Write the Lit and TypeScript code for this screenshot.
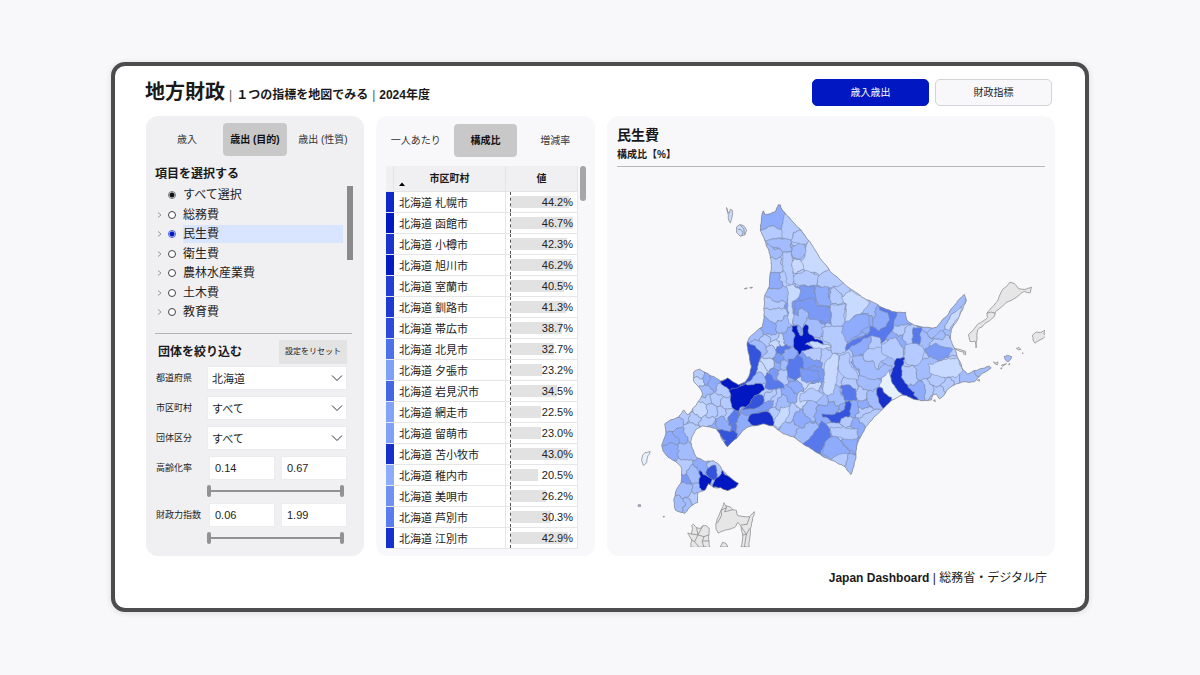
import { LitElement, html, svg, css } from 'lit';
import { customElement, property, state } from 'lit/decorators.js';
import { classMap } from 'lit/directives/class-map.js';
import { styleMap } from 'lit/directives/style-map.js';

type Point = [number, number];
type Seed = [number, number, string];

/* ---------- shared type and control styles ---------- */

const shared = css`
  *,
  *::before,
  *::after {
    box-sizing: border-box;
  }
  h1, h2, h3, p, ul {
    margin: 0;
    padding: 0;
  }
  button, input, select {
    font: inherit;
    color: inherit;
    margin: 0;
  }
  .panel {
    background: #f8f8fb;
    border-radius: 12px;
    min-width: 0;
  }
  .tabs {
    display: grid;
    grid-template-columns: repeat(3, 1fr);
    height: 33px;
  }
  .tab {
    border: 0;
    padding: 0;
    background: none;
    border-radius: 4px;
    font-size: 10px;
    line-height: 16px;
    white-space: nowrap;
    color: #333;
  }
  .tab.on {
    background: #c8c8c8;
    font-weight: 700;
    color: #111;
  }
`;

/* ---------- table data ---------- */

const CITIES: [string, number][] = [
  ['札幌市', 44.2], ['函館市', 46.7], ['小樽市', 42.3], ['旭川市', 46.2],
  ['室蘭市', 40.5], ['釧路市', 41.3], ['帯広市', 38.7], ['北見市', 32.7],
  ['夕張市', 23.2], ['岩見沢市', 34.5], ['網走市', 22.5], ['留萌市', 23.0],
  ['苫小牧市', 43.0], ['稚内市', 20.5], ['美唄市', 26.2], ['芦別市', 30.3],
  ['江別市', 42.9],
];

function ratioColour(value: number): string {
  const stops: [number, number[]][] = [
    [20, [144, 176, 252]],
    [33, [76, 110, 232]],
    [47, [0, 22, 192]],
  ];
  const i = value < 33 ? 0 : 1;
  const [v0, c0] = stops[i];
  const [v1, c1] = stops[i + 1];
  const t = Math.min(1, Math.max(0, (value - v0) / (v1 - v0)));
  return `rgb(${c0.map((c, k) => Math.round(c + (c1[k] - c) * t)).join(',')})`;
}

/* ---------- map data ---------- */

const SHADES: Record<string, string> = {
  w: '#e6f0ff', a: '#c8daff', b: '#b5cbff', c: '#a2bcfd', d: '#8eacfb',
  e: '#7a9af6', f: '#5879ec', g: '#3554dc', h: '#1730cc', i: '#0017c1',
  n: '#e6e6e6',
};

const COAST: Point[] = [
  [763, 211], [765, 215], [770, 214], [775, 212], [778, 205], [780, 205], [782, 210], [786, 215],
  [797, 227], [809, 241], [818, 255], [829, 270], [842, 282], [862, 298], [880, 307], [897, 313],
  [906, 313], [908, 322], [915, 326], [925, 328], [937, 328], [947, 317], [955, 306], [965, 295],
  [967, 301], [960, 317], [952, 330], [951, 340], [955, 349], [959, 360], [963, 370], [968, 375],
  [980, 370], [990, 367], [992, 369], [982, 375], [975, 383], [963, 383], [955, 386], [947, 392],
  [944, 397], [940, 400], [937, 395], [933, 396], [932, 401], [918, 401], [903, 396], [893, 401],
  [885, 408], [878, 415], [865, 430], [857, 447], [856, 460], [854, 468], [851, 476], [845, 468],
  [830, 461], [817, 454], [800, 443], [793, 438], [783, 435], [773, 427], [763, 425], [752, 427],
  [745, 430], [733, 442], [727, 448], [724, 444], [720, 437], [716, 430], [708, 428], [702, 427],
  [695, 431], [690, 443], [692, 450], [696, 459], [705, 463], [713, 462], [720, 468], [727, 477],
  [738, 485], [735, 489], [727, 492], [720, 489], [713, 489], [708, 485], [705, 491], [697, 495],
  [697, 504], [691, 507], [688, 510], [684, 515], [675, 512], [673, 502], [675, 493], [680, 485],
  [681, 470], [675, 463], [668, 459], [662, 452], [661, 446], [665, 435], [664, 425], [670, 421],
  [678, 418], [683, 411], [687, 416], [692, 410], [698, 402], [702, 395], [698, 388], [693, 382],
  [693, 373], [699, 370], [708, 375], [720, 382], [727, 379], [738, 386], [745, 383], [749, 376],
  [751, 367], [749, 357], [747, 343], [750, 337], [762, 328], [764, 313], [764, 298], [769, 287],
  [771, 270], [770, 257], [765, 242], [760, 230], [761, 222],
];

const SEEDS: Seed[] = [
  [773, 221, 'd'], [772, 233, 'b'], [790, 225, 'b'], [780, 243, 'c'], [800, 237, 'b'], [798, 252, 'c'],
  [817, 258, 'a'], [773, 253, 'c'], [777, 265, 'b'], [787, 262, 'b'], [788, 277, 'b'], [797, 265, 'a'],
  [804, 279, 'b'], [828, 280, 'b'], [843, 290, 'b'], [774, 280, 'd'], [777, 295, 'c'], [807, 292, 'e'],
  [822, 297, 'd'], [834, 296, 'b'], [855, 303, 'a'], [838, 313, 'b'], [773, 306, 'b'], [775, 317, 'b'],
  [798, 307, 'e'], [812, 308, 'd'], [802, 313, 'c'], [825, 318, 'e'], [870, 309, 'c'], [853, 326, 'd'], [861, 320, 'd'],
  [885, 318, 'd'], [817, 325, 'c'], [832, 330, 'b'], [832, 345, 'b'], [755, 337, 'c'], [770, 330, 'd'],
  [781, 327, 'c'], [772, 338, 'b'], [765, 343, 'b'], [780, 341, 'a'], [775, 345, 'a'], [787, 338, 'd'], [770, 352, 'b'],
  [760, 348, 'c'], [781, 351, 'f'], [786, 357, 'd'], [780, 360, 'e'], [784, 365, 'c'], [777, 366, 'd'],
  [813, 352, 'b'], [830, 356, 'b'], [843, 358, 'b'], [808, 363, 'e'], [862, 350, 'd'], [873, 357, 'b'],
  [810, 394, 'a'], [803, 400, 'a'], [802, 385, 'a'], [810, 375, 'e'], [840, 377, 'b'], [849, 372, 'b'], [850, 384, 'b'],
  [862, 364, 'd'], [879, 370, 'c'], [867, 384, 'c'], [862, 396, 'b'], [862, 412, 'b'], [866, 420, 'b'],
  [832, 396, 'c'], [821, 400, 'c'], [813, 407, 'c'], [825, 410, 'd'], [790, 395, 'd'], [797, 388, 'd'], [775, 401, 'b'],
  [781, 404, 'c'], [769, 398, 'b'], [764, 393, 'b'], [790, 414, 'b'], [775, 415, 'b'], [800, 421, 'd'], [792, 429, 'c'],
  [804, 434, 'c'], [832, 448, 'd'], [840, 458, 'b'], [850, 444, 'd'], [852, 464, 'c'], [840, 432, 'b'], [849, 434, 'b'],
  [853, 410, 'd'], [857, 428, 'd'], [846, 423, 'b'], [768, 367, 'a'], [763, 372, 'a'], [758, 381, 'c'], [774, 374, 'e'],
  [783, 376, 'b'], [792, 375, 'd'], [893, 348, 'b'], [913, 355, 'b'], [875, 350, 'b'], [889, 358, 'c'],
  [902, 320, 'd'], [899, 340, 'd'], [901, 331, 'b'], [909, 337, 'b'], [925, 338, 'c'], [931, 331, 'c'],
  [939, 333, 'c'], [950, 317, 'c'], [957, 319, 'a'], [946, 328, 'c'], [943, 342, 'b'], [922, 371, 'c'],
  [911, 376, 'b'], [918, 392, 'd'], [927, 390, 'b'], [938, 381, 'b'], [937, 392, 'b'], [953, 378, 'b'],
  [946, 385, 'b'], [968, 378, 'c'], [985, 371, 'c'], [873, 398, 'c'], [863, 404, 'd'], [700, 375, 'b'],
  [698, 383, 'a'], [707, 380, 'd'], [713, 385, 'd'], [722, 391, 'b'], [705, 393, 'c'], [707, 399, 'b'],
  [717, 401, 'b'], [726, 404, 'b'], [700, 411, 'a'], [711, 412, 'b'], [720, 414, 'b'], [693, 421, 'b'],
  [708, 423, 'b'], [722, 423, 'd'], [728, 416, 'b'], [714, 428, 'd'], [734, 424, 'f'], [742, 425, 'd'], [757, 410, 'e'],
  [674, 425, 'c'], [668, 440, 'd'], [679, 436, 'd'], [690, 432, 'b'], [685, 417, 'b'], [669, 453, 'd'],
  [686, 452, 'c'], [683, 469, 'b'], [692, 476, 'c'], [683, 481, 'e'], [683, 491, 'c'], [699, 490, 'c'],
  [692, 501, 'b'], [677, 507, 'c'], [687, 508, 'c'], [703, 466, 'd'], [716, 468, 'b'],
];

/* Traced municipalities are kept in survey sheets: a sheet has an origin and a 1:3 grid. */
interface Sheet {
  origin: Point;
  shapes: [string, string][];
}

const LAND_SHEETS: Sheet[] = [
  {
    origin: [710, 190],
    shapes: [
      ['d', '145,50 165,60 195,50 203,35 225,45 228,75 215,105 215,120 200,116 185,108 165,118 140,122'],
      ['b', '145,122 165,118 185,108 200,116 215,120 218,146 205,145 185,148 170,155 155,150'],
      ['c', '165,155 185,148 205,145 243,150 245,185 215,187 205,175 180,168'],
      ['b', '226,70 265,105 275,122 250,128 248,145 243,152 218,146 215,110'],
      ['b', '275,122 305,152 285,165 262,160 243,152 250,128'],
      ['a', '298,152 325,185 362,240 330,258 285,245 272,215 285,195 288,170'],
      ['c', '248,170 265,160 285,163 288,185 270,208 248,205 243,188'],
      ['b', '218,188 243,187 245,230 255,270 245,288 228,280 218,230'],
      ['b', '255,255 285,243 328,258 320,290 268,288 250,280'],
      ['b', '328,258 362,236 400,275 385,292 330,290 320,285'],
      ['e', '268,290 310,290 312,310 322,330 300,328 270,335 262,320'],
      ['d', '315,290 355,292 355,320 362,352 330,350 318,325'],
      ['e', '255,335 290,328 315,330 322,350 362,355 362,405 330,395 298,390 295,370 275,355 265,360 265,380 252,375'],
      ['a', '395,325 425,303 478,335 450,375 435,378 415,410 405,395 410,345'],
      ['b', '362,345 385,348 408,342 405,395 400,412 365,410'],
      ['d', '390,420 410,395 430,385 475,372 480,410 440,440 415,458 395,455 385,440'],
      ['b', '335,415 365,410 400,412 395,430 412,460 405,490 365,492 362,465 340,455'],
      ['a', '228,290 250,285 270,300 268,320 248,335 252,380 250,410 235,400 232,340'],
      ['i', '245,410 262,408 264,428 268,437 275,440 285,405 295,410 298,435 315,450 338,458 340,465 300,460 285,465 310,478 290,482 275,485 268,497 255,480 250,455 255,440 245,425'],
      ['a', '298,458 330,462 360,468 363,475 340,480 315,478 298,465'],
    ],
  },
  {
    origin: [840, 270],
    shapes: [
      ['b', '195,230 225,222 250,232 252,255 245,275 225,290 200,285 192,262'],
      ['c', '35,262 70,258 75,275 100,275 115,302 135,285 158,290 150,310 120,328 90,330 60,320 58,300 40,285'],
      ['b', '70,258 90,238 115,234 130,235 145,262 125,275 112,302 100,275 75,275'],
      ['b', '125,225 150,208 170,205 180,225 192,240 190,266 165,275 145,262 128,255'],
      ['c', '290,165 320,135 345,100 380,70 378,95 345,130 325,155 318,180 300,185 275,208 262,190'],
      ['a', '325,155 345,130 368,112 362,140 330,185 318,180'],
      ['f', '118,110 172,124 160,180 135,215 125,222 120,205 85,205 18,245 20,225 85,195 92,170 105,175 118,185 140,170 150,150 145,130 120,122'],
      ['f', '222,175 248,173 240,225 218,222'],
      ['w', '150,300 152,320 165,350 180,370 193,380 160,398 150,385 138,375 128,358 118,352 125,325'],
      ['h', '170,268 195,265 192,285 185,300 185,325 205,355 225,370 222,378 237,396 195,382 180,370 165,350 152,320 158,300 165,290'],
      ['h', '115,355 128,358 138,375 155,385 152,405 130,419 117,400 110,375'],
      ['a', '265,285 300,275 355,265 370,305 350,325 310,325 270,310'],
      ['e', '255,240 290,222 320,235 340,240 325,265 300,275 265,260'],
    ],
  },
  {
    origin: [750, 340],
    shapes: [
      ['b', '150,165 190,148 222,165 205,185 180,185 150,190'],
      ['b', '268,50 295,38 300,75 325,110 325,125 285,115 265,90'],
      ['d', '275,302 325,293 318,350 300,335 285,320'],
      ['b', '240,265 325,270 325,298 285,302 250,295'],
      ['d', '243,295 262,295 280,320 300,345 265,348 245,362 212,350 225,310'],
      ['f', '130,60 145,45 158,60 155,110 135,125 115,115 108,85 115,60'],
      ['a', '225,70 250,42 268,50 262,90 250,165 235,170 218,160 222,120'],
      ['e', '150,85 175,90 205,95 210,120 170,132 155,125'],
      ['a', '70,260 90,205 120,200 115,230 85,270'],
      ['g', '215,225 245,228 280,215 285,190 300,185 302,225 295,235 275,238 270,252 245,252 235,238 218,235'],
      ['f', '272,140 285,138 300,138 318,150 322,180 300,185 285,185 275,165'],
      ['f', '215,245 240,275 243,295 225,310 210,348 155,318 190,285'],
    ],
  },
  {
    origin: [630, 330],
    shapes: [
      ['g', '345,34 375,50 392,70 382,120 365,150 340,172 318,172 345,158 356,135 361,110 350,80'],
      ['e', '335,243 370,240 400,222 430,215 425,235 375,255 350,260 328,252'],
      ['g', '385,195 400,205 398,225 370,240 335,243 345,235 358,225 372,200'],
      ['i', '330,172 345,165 395,165 403,180 385,195 372,200 358,225 345,235 330,235 325,247 310,240 300,205 295,185 310,175'],
      ['i', '268,157 290,144 300,150 330,166 325,175 305,178 298,185'],
      ['f', '310,240 325,247 325,265 315,285 295,290 292,265'],
      ['h', '355,265 365,255 415,250 428,268 428,294 400,289 375,292 352,275'],
      ['g', '254,303 300,308 308,303 322,315 318,334 300,346 292,359 279,345 285,335'],
      ['f', '403,145 410,130 425,140 435,155 460,165 462,178 430,180 405,178'],
    ],
  },
  {
    origin: [620, 430],
    shapes: [
      ['i', '305,125 320,141 358,162 347,182 320,191 300,182 276,176 285,150 295,145'],
      ['i', '237,125 262,145 275,152 270,165 255,185 243,185 235,165'],
      ['g', '262,120 285,110 288,130 290,145 280,155 262,145 257,128'],
    ],
  },
];

const ISLE_SHEETS: Sheet[] = [
  {
    origin: [710, 190],
    shapes: [
      ['a', '78,112 88,105 100,108 109,122 104,135 90,140 78,128'],
      ['a', '48,53 52,66 57,70 60,58 66,62 65,80 60,100 53,85'],
      ['n', '102,298 110,295 109,298'],
      ['n', '118,295 126,293 125,296'],
    ],
  },
  {
    origin: [840, 270],
    shapes: [
      ['n', '388,195 415,165 445,145 443,132 452,120 475,95 490,60 512,38 525,42 540,58 556,60 577,53 574,70 555,66 545,72 530,85 500,100 485,115 468,128 465,142 440,160 415,182 412,215 410,236 407,216 392,217'],
      ['n', '580,198 592,188 605,190 620,182 614,194 622,198 612,208 600,214 588,222 582,212'],
      ['n', '345,238 362,241 378,246 379,257 372,254 374,249 360,246'],
      ['n', '463,278 470,282 476,278 475,287 468,285'],
      ['c', '495,262 505,258 518,263 514,272 506,278 498,272'],
      ['n', '487,288 502,284 490,292'],
      ['n', '532,238 540,235 545,241 538,242'],
      ['n', '484,298 488,296 487,300'],
      ['n', '508,286 512,283 511,288'],
      ['n', '549,252 552,251 551,254'],
      ['n', '281,395 286,392 288,398'],
      ['n', '414,334 420,331 421,336'],
    ],
  },
  {
    origin: [620, 430],
    shapes: [
      ['w', '65,80 72,72 88,68 80,85 75,105 67,110 63,98'],
      ['c', '52,229 59,229 59,234 52,234'],
      ['c', '127,264 131,264 129,267'],
      ['n', '302,245 310,223 316,232 330,236 337,244 348,246 352,262 365,264 388,265 402,250 397,270 390,300 388,330 387,357 361,357 366,335 367,320 362,295 352,282 342,298 330,302 312,306 293,314 286,302 288,280'],
      ['n', '201,314 212,317 216,300 213,292 218,287 228,298 240,300 247,292 256,291 266,300 265,320 268,357 211,357 213,335'],
      ['n', '299,357 306,342 316,345 322,357'],
    ],
  },
];

/* Inner borders of the Aomori and Rishiri outlines. */
const SEAMS: [Point, string][] = [
  [[620, 430], 'M302,245 318,238 312,250 337,244 M318,238 316,232 M302,245 303,262 290,285 M362,290 380,288 388,265 M362,295 378,318 372,357 M366,320 380,318 M378,318 388,300 M212,317 232,320 247,292 M232,320 222,340 213,335 M232,320 250,325 265,320 M250,325 245,340 250,357 M222,340 235,357 M228,298 232,320 M245,338 266,338'],
  [[710, 190], 'M82,118 92,120 98,128 94,139 M88,105 100,116 102,134'],
  [[840, 270], 'M443,132 456,128 468,132'],
];

const hash = (x: number, y: number): number => {
  const s = Math.sin(x * 12.9898 + y * 78.233) * 43758.5453;
  return s - Math.floor(s) - 0.5;
};

const snap = (v: number): number => Math.round(v * 10) / 10;

/* Breaks a straight border into an uneven line; both neighbours get the same one. */
function rough(a: Point, b: Point, strength: number): Point[] {
  const flip = a[0] > b[0] || (a[0] === b[0] && a[1] > b[1]);
  const walk = (p: Point, q: Point): Point[] => {
    const dx = q[0] - p[0];
    const dy = q[1] - p[1];
    const length = Math.hypot(dx, dy);
    if (length < 3) return [q];
    const k = (hash(p[0] + q[0], p[1] + q[1]) * strength * Math.min(length, 9)) / length;
    const m: Point = [(p[0] + q[0]) / 2 - dy * k, (p[1] + q[1]) / 2 + dx * k];
    return [...walk(p, m), ...walk(m, q)];
  };
  if (!flip) return walk(a, b);
  return [...walk(b, a).reverse().slice(1), b];
}

function outline(points: Point[], strength: number): string {
  const out = points.flatMap((p, i) => rough(p, points[(i + 1) % points.length], strength));
  return `M${out.map(([x, y]) => `${x.toFixed(1)},${y.toFixed(1)}`).join(' ')}Z`;
}

function cell(index: number): Point[] {
  const [sx, sy] = SEEDS[index];
  let poly: Point[] = [[600, 150], [1060, 150], [1060, 570], [600, 570]];
  SEEDS.forEach(([ox, oy], j) => {
    if (j === index) return;
    const mx = (sx + ox) / 2;
    const my = (sy + oy) / 2;
    const side = ([x, y]: Point) => (x - mx) * (ox - sx) + (y - my) * (oy - sy);
    const next: Point[] = [];
    poly.forEach((p, i) => {
      const q = poly[(i + 1) % poly.length];
      const a = side(p);
      const b = side(q);
      if (a <= 0) next.push(p);
      if (a < 0 !== b < 0 && a !== b) {
        const t = a / (a - b);
        next.push([p[0] + (q[0] - p[0]) * t, p[1] + (q[1] - p[1]) * t]);
      }
    });
    poly = next;
  });
  return poly.map(([x, y]): Point => [snap(x), snap(y)]);
}

const traced = (sheets: Sheet[], strength: number) =>
  sheets.flatMap(({ origin, shapes }) =>
    shapes.map(([shade, text]) => {
      const points = text.split(' ').map((pair): Point => {
        const [x, y] = pair.split(',').map(Number);
        return [origin[0] + x / 3, origin[1] + y / 3];
      });
      return { shade, d: outline(points, strength) };
    }),
  );

const COAST_PATH = outline(COAST, 0.15);
const CELLS = SEEDS.map((s, i) => ({ shade: s[2], d: outline(cell(i), 0.6) }));
const TRACED = traced(LAND_SHEETS, 0.3);
const ISLES = traced(ISLE_SHEETS, 0.15);

@customElement('hokkaido-map')
export class HokkaidoMap extends LitElement {
  static styles = css`
    :host {
      display: block;
    }
    .map {
      display: block;
      width: 100%;
      height: auto;
    }
    .area {
      stroke: #7f8ba6;
      stroke-width: 0.6;
      stroke-linejoin: round;
    }
    .line {
      fill: none;
      stroke: #808080;
      stroke-width: 0.7;
      stroke-linejoin: round;
    }
    .isle {
      stroke: #808080;
      stroke-width: 0.7;
    }
  `;

  render() {
    return html`
      <svg class="map" viewBox="616 170 430 379" role="img" aria-label="北海道 民生費 構成比">
        <defs>
          <clipPath id="land"><path d=${COAST_PATH}></path></clipPath>
        </defs>
        <path fill=${SHADES.b} d=${COAST_PATH}></path>
        <g clip-path="url(#land)">
          ${[...CELLS, ...TRACED].map((p) => svg`<path class="area" fill=${SHADES[p.shade]} d=${p.d}></path>`)}
        </g>
        <path class="line" d=${COAST_PATH}></path>
        ${ISLES.map((p) => svg`<path class="isle" fill=${SHADES[p.shade]} d=${p.d}></path>`)}
        ${SEAMS.map(
          ([o, d]) => svg`<g transform="translate(${o[0]} ${o[1]}) scale(0.33333)">
            <path class="line" vector-effect="non-scaling-stroke" d=${d}></path>
          </g>`,
        )}
      </svg>
    `;
  }
}

@customElement('range-pair')
export class RangePair extends LitElement {
  @property() name = '';
  @property({ type: Number }) low = 0;
  @property({ type: Number }) high = 1;

  static styles = [
    shared,
    css`
      :host {
        display: grid;
        gap: 5px;
      }
      .boxes {
        display: grid;
        grid-template-columns: 1fr 1fr;
        gap: 6px;
        padding-left: 2px;
      }
      .box {
        width: 100%;
        height: 24px;
        border: 1px solid #ececef;
        background: #fff;
        padding: 0 5px;
        font-size: 11px;
        line-height: 22px;
        color: #222;
      }
      .slider {
        display: grid;
        height: 12px;
        margin-right: 3px;
        align-items: center;
        background: linear-gradient(#929292, #929292) center / 100% 2px no-repeat;
      }
      .slider input {
        grid-area: 1 / 1;
        appearance: none;
        width: 100%;
        height: 12px;
        background: none;
        pointer-events: none;
      }
      .slider input::-webkit-slider-thumb {
        appearance: none;
        width: 4px;
        height: 12px;
        border-radius: 2px;
        background: #929292;
        pointer-events: auto;
      }
    `,
  ];

  render() {
    const { low, high, name } = this;
    return html`
      <div class="boxes">
        <input class="box" type="text" inputmode="decimal" aria-label="${name} 下限" .value=${low.toFixed(2)} />
        <input class="box" type="text" inputmode="decimal" aria-label="${name} 上限" .value=${high.toFixed(2)} />
      </div>
      <div class="slider">
        <input type="range" aria-label="${name} 下限" min=${low} max=${high} step="0.01" .value=${String(low)} />
        <input type="range" aria-label="${name} 上限" min=${low} max=${high} step="0.01" .value=${String(high)} />
      </div>
    `;
  }
}

@customElement('filter-panel')
export class FilterPanel extends LitElement {
  @state() private tab = 1;
  @state() private item = '民生費';

  static styles = [
    shared,
    css`
      :host {
        display: block;
      }
      .panel {
        height: 100%;
        background: #f0f0f3;
        padding: 7px 9px;
      }
      .tabs {
        gap: 4px;
      }
      .heading {
        font-size: 12px;
        line-height: 16px;
        font-weight: 700;
        color: #1a1a1a;
      }
      .tabs + .heading {
        margin-top: 10px;
      }
      .scroller {
        display: grid;
        grid-template-columns: 1fr 6px;
        gap: 4px;
        margin: 4px 2px 0 0;
      }
      .bar {
        height: 74px;
        background: #8a8a8a;
      }
      .items {
        display: grid;
        grid-auto-rows: 1fr;
        height: 137px;
        list-style: none;
      }
      .item {
        display: grid;
        grid-template-columns: 8px 10px 1fr;
        column-gap: 5px;
        align-items: center;
        font-size: 12px;
        line-height: 18px;
        color: #222;
      }
      .item input {
        appearance: none;
        width: 8px;
        height: 8px;
        border: 1px solid #444;
        border-radius: 50%;
        background: #fff;
      }
      .item input.dot {
        border-color: #777;
        background: radial-gradient(circle, #111 2px, #f0f0f3 3px);
      }
      .item input:checked {
        border-color: #4a5be0;
        background: radial-gradient(circle, #0017c1 2px, #f0f0f3 3px);
      }
      .arrow {
        width: 5px;
        height: 6px;
        margin-left: 2px;
        fill: none;
        stroke: #999;
      }
      .name.on {
        background: #d9e5ff;
      }
      .rule {
        height: 1px;
        border: 0;
        margin: 10px 3px 0 0;
        background: #b4b4b4;
      }
      .row {
        display: flex;
        justify-content: space-between;
        align-items: center;
        margin: 6px 8px 2px 3px;
      }
      .reset {
        border: 0;
        width: 68px;
        height: 24px;
        padding: 0;
        background: #e3e3e4;
        font-size: 8px;
        line-height: 12px;
        color: #222;
      }
      .form {
        display: grid;
        grid-template-columns: 52px 1fr;
        row-gap: 6px;
        margin-right: 8px;
      }
      .label {
        font-size: 9px;
        line-height: 24px;
        padding-left: 1px;
        white-space: nowrap;
        color: #222;
      }
      .pick {
        display: grid;
        align-items: center;
      }
      .pick select {
        grid-area: 1 / 1;
        appearance: none;
        width: 100%;
        height: 24px;
        border: 1px solid #ececef;
        border-radius: 0;
        background: #fff;
        padding: 1px 4px 0;
        font-size: 11px;
        color: #222;
      }
      .pick svg {
        grid-area: 1 / 1;
        justify-self: end;
        width: 12px;
        height: 8px;
        margin-right: 4px;
        pointer-events: none;
        fill: none;
        stroke: #333;
      }
    `,
  ];

  private items = ['総務費', '民生費', '衛生費', '農林水産業費', '土木費', '教育費'];

  private pick(id: string, label: string, value: string) {
    return html`
      <label class="label" for=${id}>${label}</label>
      <div class="pick">
        <select id=${id}><option>${value}</option></select>
        <svg viewBox="0 0 12 8"><path d="M1 1.5 6 6.5 11 1.5"></path></svg>
      </div>
    `;
  }

  render() {
    return html`
      <section class="panel">
        <div class="tabs">
          ${['歳入', '歳出 (目的)', '歳出 (性質)'].map(
            (t, i) => html`<button class=${classMap({ tab: true, on: i === this.tab })} @click=${() => (this.tab = i)}>${t}</button>`,
          )}
        </div>
        <h2 class="heading">項目を選択する</h2>
        <div class="scroller">
          <ul class="items">
            <li>
              <label class="item"><span></span><input class="dot" type="radio" name="all" /><span>すべて選択</span></label>
            </li>
            ${this.items.map(
              (name) => html`<li>
                <label class="item">
                  <svg class="arrow" viewBox="0 0 5 6"><path d="M1 0.5 4 3 1 5.5"></path></svg>
                  <input type="radio" name="item" .checked=${name === this.item} @change=${() => (this.item = name)} />
                  <span class=${classMap({ name: true, on: name === this.item })}>${name}</span>
                </label>
              </li>`,
            )}
          </ul>
          <div class="bar"></div>
        </div>
        <hr class="rule" />
        <div class="row">
          <h2 class="heading">団体を絞り込む</h2>
          <button class="reset">設定をリセット</button>
        </div>
        <div class="form">
          ${this.pick('pref', '都道府県', '北海道')} ${this.pick('city', '市区町村', 'すべて')}
          ${this.pick('kind', '団体区分', 'すべて')}
          <span class="label">高齢化率</span>
          <range-pair name="高齢化率" .low=${0.14} .high=${0.67}></range-pair>
          <span class="label">財政力指数</span>
          <range-pair name="財政力指数" .low=${0.06} .high=${1.99}></range-pair>
        </div>
      </section>
    `;
  }
}

@customElement('ratio-panel')
export class RatioPanel extends LitElement {
  @state() private tab = 1;

  static styles = [
    shared,
    css`
      :host {
        display: block;
      }
      .panel {
        height: 100%;
        padding: 8px 8px 7px;
      }
      .tabs {
        gap: 6px;
      }
      .scroller {
        display: grid;
        grid-template-columns: 1fr 6px;
        gap: 2px;
        margin: 9px 1px 0 2px;
      }
      .bar {
        height: 35px;
        border-radius: 3px;
        background: #a6a6a6;
      }
      .grid {
        width: 100%;
        border-collapse: separate;
        border-spacing: 0;
        table-layout: fixed;
        background: #fff;
      }
      .c-key {
        width: 8px;
      }
      .c-value {
        width: 72px;
      }
      .grid th {
        height: 26px;
        padding: 0;
        background: #f0f0f2;
        border-right: 1px solid #e4e4e6;
        border-bottom: 1px solid #e4e4e6;
        font-size: 10px;
        line-height: 14px;
        font-weight: 700;
        color: #1a1a1a;
      }
      .sort {
        display: grid;
        grid-template-columns: 16px 1fr 16px;
      }
      .sort svg {
        width: 6px;
        height: 4px;
        margin-left: 5px;
        align-self: end;
      }
      .grid td {
        height: 21px;
        padding: 0;
        border-bottom: 1px solid #e6e6e8;
        font-size: 11px;
        line-height: 20px;
        color: #222;
      }
      .grid td.name {
        padding: 3px 0 0 5px;
        line-height: 17px;
        white-space: nowrap;
        border-right: 1px solid #e6e6e8;
      }
      .grid td.value {
        padding-left: 4px;
        border-right: 1px solid #e6e6e8;
      }
      .meter {
        display: grid;
        align-items: center;
        height: 20px;
        border-left: 1px dashed #555;
      }
      .fill {
        grid-area: 1 / 1;
        height: 12px;
        background: #e2e2e2;
      }
      .num {
        grid-area: 1 / 1;
        text-align: right;
        padding-right: 4px;
      }
    `,
  ];

  render() {
    return html`
      <section class="panel">
        <div class="tabs">
          ${['一人あたり', '構成比', '増減率'].map(
            (t, i) => html`<button class=${classMap({ tab: true, on: i === this.tab })} @click=${() => (this.tab = i)}>${t}</button>`,
          )}
        </div>
        <div class="scroller">
          <table class="grid">
            <colgroup><col class="c-key" /><col /><col class="c-value" /></colgroup>
            <thead>
              <tr>
                <th></th>
                <th>
                  <div class="sort">
                    <svg viewBox="0 0 6 4"><path d="M0 4 3 0.5 6 4Z"></path></svg>
                    <span>市区町村</span>
                  </div>
                </th>
                <th>値</th>
              </tr>
            </thead>
            <tbody>
              ${CITIES.map(
                ([name, value]) => html`<tr>
                  <td style=${styleMap({ background: ratioColour(value) })}></td>
                  <td class="name">北海道 ${name}</td>
                  <td class="value">
                    <div class="meter">
                      <div class="fill" style=${styleMap({ width: `${value * 2}%` })}></div>
                      <div class="num">${value.toFixed(1)}%</div>
                    </div>
                  </td>
                </tr>`,
              )}
            </tbody>
          </table>
          <div class="bar"></div>
        </div>
      </section>
    `;
  }
}

@customElement('app-root')
export class AppRoot extends LitElement {
  @state() private view = 0;

  static styles = [
    shared,
    css`
      :host {
        display: block;
        min-height: 100vh;
        padding: 62px 111px;
        box-sizing: border-box;
        background: #f8f8fb;
        color: #1a1a1a;
        font-family: 'Liberation Sans', 'Noto Sans CJK JP', sans-serif;
        font-size: 12px;
      }
      .frame {
        border: 4px solid #4c4c4e;
        border-radius: 14px;
        background: #fff;
        padding: 13px 30px 21px;
        box-shadow: 0 1px 6px rgba(0, 0, 0, 0.12);
      }
      .head {
        display: flex;
        justify-content: space-between;
        align-items: center;
        gap: 16px;
      }
      .title {
        display: flex;
        align-items: baseline;
        gap: 4px;
        white-space: nowrap;
      }
      .title h1 {
        font-size: 20px;
        line-height: 27px;
        font-weight: 700;
      }
      .title p {
        font-size: 12px;
        line-height: 18px;
        font-weight: 700;
      }
      .title .bar {
        font-weight: 400;
        color: #555;
      }
      .views {
        display: flex;
        gap: 6px;
        margin-right: 3px;
      }
      .view {
        width: 117px;
        height: 27px;
        padding: 0;
        border: 1px solid #d4d4d8;
        border-radius: 5px;
        background: #f8f8fb;
        font-size: 10px;
        line-height: 16px;
      }
      .view.on {
        border-color: #0017c1;
        background: #0017c1;
        color: #fff;
      }
      .columns {
        display: grid;
        grid-template-columns: 218px 219px 1fr;
        gap: 12px;
        margin: 10px 0 0 1px;
      }
      .result {
        padding: 10px 10px 7px;
      }
      .result h2 {
        font-size: 14px;
        line-height: 18px;
      }
      .result h3 {
        margin-top: 3px;
        font-size: 10px;
        line-height: 16px;
      }
      .result hr {
        height: 1px;
        border: 0;
        margin: 3px 0;
        background: #b8b8ba;
      }
      .foot {
        margin: 13px 8px 0 0;
        text-align: right;
        font-size: 12px;
        line-height: 18px;
      }
    `,
  ];

  render() {
    return html`
      <main class="frame">
        <header class="head">
          <div class="title">
            <h1>地方財政</h1>
            <span class="bar">|</span>
            <p>１つの指標を地図でみる</p>
            <span class="bar">|</span>
            <p>2024年度</p>
          </div>
          <nav class="views">
            ${['歳入歳出', '財政指標'].map(
              (t, i) => html`<button class=${classMap({ view: true, on: i === this.view })} @click=${() => (this.view = i)}>${t}</button>`,
            )}
          </nav>
        </header>
        <div class="columns">
          <filter-panel></filter-panel>
          <ratio-panel></ratio-panel>
          <section class="panel result">
            <h2>民生費</h2>
            <h3>構成比【%】</h3>
            <hr />
            <hokkaido-map></hokkaido-map>
          </section>
        </div>
        <footer class="foot"><strong>Japan Dashboard</strong> | 総務省・デジタル庁</footer>
      </main>
    `;
  }
}
